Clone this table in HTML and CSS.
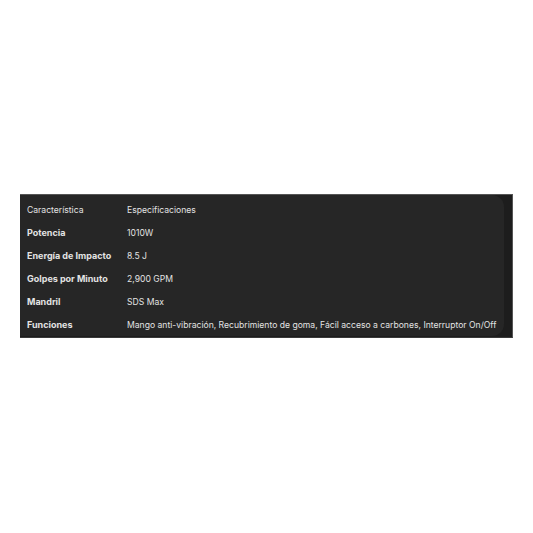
FILE: index.html
```html
<!DOCTYPE html>
<html lang="es">
<head>
<meta charset="utf-8">
<link rel="stylesheet" href="styles.css">
</head>
<body>
<div class="frame">
  <div class="card">
    <table class="specs">
      <colgroup><col class="c1"><col class="c2"></colgroup>
      <tr class="head"><td>Característica</td><td>Especificaciones</td></tr>
      <tr><th>Potencia</th><td>1010W</td></tr>
      <tr><th>Energía de Impacto</th><td>8.5 J</td></tr>
      <tr><th>Golpes por Minuto</th><td>2,900 GPM</td></tr>
      <tr><th>Mandril</th><td>SDS Max</td></tr>
      <tr><th>Funciones</th><td>Mango anti-vibración, Recubrimiento de goma, Fácil acceso a carbones, Interruptor On/Off</td></tr>
    </table>
  </div>
</div>
</body>
</html>
```
FILE: styles.css
```css
html, body {
  margin: 0;
  padding: 0;
  background: #ffffff;
}
body {
  padding-top: 194px;
  padding-left: 20px;
}
.frame {
  background: #1d1d1d;
  border-top: 1px solid #555555;
  border-right: 1px solid #555555;
  border-bottom: 1px solid #3a3a3a;
  padding-right: 8px;
  box-sizing: border-box;
  width: 493px;
  height: 144px;
}
.card {
  background: #262626;
  border-radius: 0 12px 12px 0;
  height: 141px;
  padding-top: 3px;
  box-sizing: border-box;
}
.specs {
  border-collapse: collapse;
  table-layout: fixed;
  width: 484px;
  font-family: Inter, "Roboto", sans-serif;
  font-size: 9px;
  color: #e3e3e3;
}
.c1 { width: 107px; }
.specs td, .specs th {
  height: 23px;
  padding: 0;
  vertical-align: middle;
  text-align: left;
  white-space: nowrap;
  overflow: visible;
}
.specs th {
  font-weight: 700;
}
.specs tr > :first-child {
  padding-left: 7px;
}
.specs td {
  font-weight: 400;
  font-size: 8.6px;
}
```
